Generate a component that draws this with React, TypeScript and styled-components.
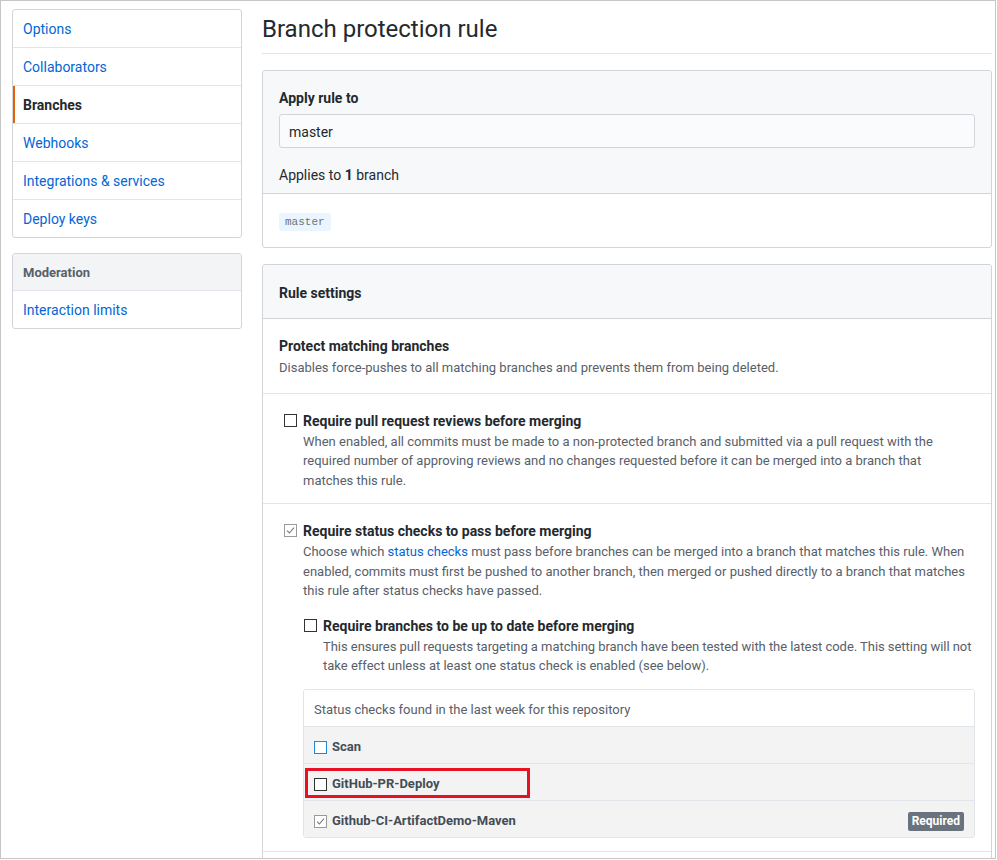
import React from 'react';
import styled, { createGlobalStyle, css } from 'styled-components';

const Global = createGlobalStyle`
  html, body { margin: 0; padding: 0; background: #fff; }
  body {
    font-family: Roboto, "Liberation Sans", sans-serif;
    color: #24292e;
    font-size: 14px;
  }
  * { box-sizing: border-box; }
`;

const Frame = styled.div`
  width: 996px;
  height: 859px;
  border: 1px solid #c6c6c6;
  overflow: hidden;
  display: flex;
  align-items: flex-start;
  gap: 20px;
  padding: 8px 3px 0 11px;
`;

const Sidebar = styled.nav`
  width: 230px;
  flex-shrink: 0;
  display: flex;
  flex-direction: column;
  gap: 15px;
`;

const Menu = styled.div`
  border: 1px solid #d1d5da;
  border-radius: 3px;
  background: #fff;
  overflow: hidden;
`;

const MenuHeading = styled.div`
  padding: 9px 10px 7px;
  font-size: 13px;
  line-height: 20px;
  font-weight: 700;
  color: #586069;
  background: #f3f4f6;
  border-bottom: 1px solid #e1e4e8;
`;

const MenuItem = styled.a<{ $selected?: boolean }>`
  position: relative;
  display: block;
  padding: 9px 10px 7px;
  line-height: 21px;
  font-size: 14px;
  color: #0366d6;
  text-decoration: none;
  border-bottom: 1px solid #e1e4e8;
  &:last-child { border-bottom: 0; }
  ${(p) =>
    p.$selected &&
    css`
      color: #24292e;
      font-weight: 700;
      &::before {
        content: '';
        position: absolute;
        top: 0;
        bottom: 0;
        left: 0;
        width: 2px;
        background: #e36209;
      }
    `}
`;

const Main = styled.main`
  width: 730px;
  flex-shrink: 0;
  display: flex;
  flex-direction: column;
`;

const Subhead = styled.div`
  padding: 2px 0 6px;
  border-bottom: 1px solid #e1e4e8;
  margin-bottom: 16px;
`;

const Heading = styled.h2`
  margin: 0;
  font-size: 24px;
  font-weight: 400;
  line-height: 36px;
  color: #24292e;
`;

const Box = styled.section`
  border: 1px solid #d1d5da;
  border-radius: 3px;
  margin-bottom: 16px;
  background: #fff;
`;

const BoxHeader = styled.div<{ $pad?: string }>`
  background: #f6f8fa;
  padding: ${(p) => p.$pad || '16px'};
  border-bottom: 1px solid #d1d5da;
  border-radius: 3px 3px 0 0;
`;

const Label = styled.div`
  font-size: 14px;
  font-weight: 700;
  line-height: 21px;
`;

const Input = styled.div`
  margin-top: 5px;
  height: 34px;
  display: flex;
  align-items: center;
  padding: 1px 9px 0;
  background: #fafbfc;
  border: 1px solid #d1d5da;
  border-radius: 3px;
  font-size: 14px;
`;

const Applies = styled.div`
  margin-top: 17px;
  font-size: 14px;
  line-height: 21px;
`;

const BoxBody = styled.div<{ $pad?: string }>`
  padding: ${(p) => p.$pad || '16px'};
  border-bottom: 1px solid #e1e4e8;
  &:last-child { border-bottom: 0; }
`;

const TagRow = styled.div`
  display: flex;
  height: 18px;
`;

const BranchTag = styled.code`
  display: block;
  height: 18px;
  line-height: 18px;
  padding: 0 6px;
  font-family: "Liberation Mono", monospace;
  font-size: 11px;
  color: #6a737d;
  background: #eaf5ff;
  border-radius: 3px;
`;

const Title = styled.div<{ $gap?: number }>`
  font-size: 14px;
  font-weight: 700;
  line-height: 21px;
  color: #24292e;
  margin-bottom: ${(p) => p.$gap || 0}px;
`;

const Note = styled.div`
  font-size: 13px;
  line-height: 19.5px;
  color: #586069;
`;

const Line = styled.span<{ $tight?: boolean }>`
  display: block;
  white-space: nowrap;
  letter-spacing: ${(p) => (p.$tight ? '-0.045px' : 'normal')};
`;

const Link = styled.a`
  color: #0366d6;
  text-decoration: none;
`;

const CheckRow = styled.div<{ $indent: number; $top?: number }>`
  display: grid;
  grid-template-columns: 13px 1fr;
  column-gap: 6px;
  padding-left: ${(p) => p.$indent}px;
  margin-top: ${(p) => p.$top || 0}px;
`;

type CheckKind = 'empty' | 'checked' | 'focus';

const CheckBox = styled.span<{ $kind: CheckKind; $top?: number }>`
  width: 13px;
  height: 13px;
  margin-top: ${(p) => (p.$top === undefined ? 3 : p.$top)}px;
  display: inline-flex;
  align-items: center;
  justify-content: center;
  background: #fff;
  border: 1px solid
    ${(p) => (p.$kind === 'checked' ? '#9a9a9a' : p.$kind === 'focus' ? '#1e8ad6' : '#333')};
  flex-shrink: 0;
`;

const Check = ({ kind, top }: { kind: CheckKind; top?: number }) => (
  <CheckBox $kind={kind} $top={top}>
    {kind === 'checked' && (
      <svg width="9" height="9" viewBox="0 0 9 9">
        <path d="M1 4.6 L3.4 7 L8 1.6" fill="none" stroke="#7a7a7a" strokeWidth="1.1" />
      </svg>
    )}
  </CheckBox>
);

const StatusBox = styled.div`
  margin-top: 13.5px;
  border: 1px solid #e1e4e8;
  border-radius: 3px;
  overflow: hidden;
`;

const StatusHeader = styled.div`
  padding: 11px 10px 7px;
  font-size: 13px;
  line-height: 18px;
  color: #586069;
  background: #fff;
  border-bottom: 1px solid #e1e4e8;
`;

const StatusRow = styled.div`
  position: relative;
  display: flex;
  align-items: center;
  gap: 5px;
  height: 37px;
  padding: 4px 10px 0;
  background: #f3f3f3;
  border-bottom: 1px solid #e1e4e8;
  &:last-child { border-bottom: 0; height: 36px; }
`;

const StatusName = styled.span`
  font-size: 13px;
  font-weight: 700;
  color: #444d56;
  line-height: 20px;
  flex: 1;
`;

const Badge = styled.span`
  display: inline-block;
  padding: 0 4px;
  font-size: 12px;
  font-weight: 700;
  line-height: 19px;
  color: #fff;
  background: #6a737d;
  border-radius: 2px;
`;

const Highlight = styled.span`
  position: absolute;
  left: 1px;
  top: 4px;
  width: 225px;
  height: 30px;
  border: 3px solid #e81123;
  pointer-events: none;
`;

const Spacer = styled.div`
  height: 60px;
`;

export default function App() {
  return (
    <>
      <Global />
      <Frame>
        <Sidebar>
          <Menu>
            <MenuItem>Options</MenuItem>
            <MenuItem>Collaborators</MenuItem>
            <MenuItem $selected>Branches</MenuItem>
            <MenuItem>Webhooks</MenuItem>
            <MenuItem>Integrations &amp; services</MenuItem>
            <MenuItem>Deploy keys</MenuItem>
          </Menu>
          <Menu>
            <MenuHeading>Moderation</MenuHeading>
            <MenuItem>Interaction limits</MenuItem>
          </Menu>
        </Sidebar>
        <Main>
          <Subhead>
            <Heading>Branch protection rule</Heading>
          </Subhead>
          <Box>
            <BoxHeader $pad="17px 16px 7px">
              <Label>Apply rule to</Label>
              <Input>master</Input>
              <Applies>
                Applies to <b>1</b> branch
              </Applies>
            </BoxHeader>
            <BoxBody $pad="19px 16px 16px">
              <TagRow>
                <BranchTag>master</BranchTag>
              </TagRow>
            </BoxBody>
          </Box>
          <Box>
            <BoxHeader $pad="18px 16px 14px">
              <Label>Rule settings</Label>
            </BoxHeader>
            <BoxBody $pad="17px 16px 15px">
              <Title $gap={1}>Protect matching branches</Title>
              <Note>Disables force-pushes to all matching branches and prevents them from being deleted.</Note>
            </BoxBody>
            <BoxBody $pad="17px 16px 13px">
              <CheckRow $indent={5}>
                <Check kind="empty" />
                <div>
                  <Title>Require pull request reviews before merging</Title>
                  <Note>
                    <Line>
                      When enabled, all commits must be made to a non-protected branch and submitted via a pull request with the
                    </Line>
                    <Line>
                      required number of approving reviews and no changes requested before it can be merged into a branch that
                    </Line>
                    <Line>matches this rule.</Line>
                  </Note>
                </div>
              </CheckRow>
            </BoxBody>
            <BoxBody $pad="17px 16px 13px">
              <CheckRow $indent={5}>
                <Check kind="checked" />
                <div>
                  <Title>Require status checks to pass before merging</Title>
                  <Note>
                    <Line>
                      Choose which <Link>status checks</Link> must pass before branches can be merged into a branch that matches
                      this rule. When
                    </Line>
                    <Line>
                      enabled, commits must first be pushed to another branch, then merged or pushed directly to a branch that
                      matches
                    </Line>
                    <Line>this rule after status checks have passed.</Line>
                  </Note>
                  <CheckRow $indent={1} $top={15}>
                    <Check kind="empty" />
                    <div>
                      <Title>Require branches to be up to date before merging</Title>
                      <Note>
                        <Line $tight>
                          This ensures pull requests targeting a matching branch have been tested with the latest code. This
                          setting will not
                        </Line>
                        <Line>take effect unless at least one status check is enabled (see below).</Line>
                      </Note>
                    </div>
                  </CheckRow>
                  <StatusBox>
                    <StatusHeader>Status checks found in the last week for this repository</StatusHeader>
                    <StatusRow>
                      <Check kind="focus" top={0} />
                      <StatusName>Scan</StatusName>
                    </StatusRow>
                    <StatusRow>
                      <Check kind="empty" top={0} />
                      <StatusName>GitHub-PR-Deploy</StatusName>
                      <Highlight />
                    </StatusRow>
                    <StatusRow>
                      <Check kind="checked" top={0} />
                      <StatusName>Github-CI-ArtifactDemo-Maven</StatusName>
                      <Badge>Required</Badge>
                    </StatusRow>
                  </StatusBox>
                </div>
              </CheckRow>
            </BoxBody>
            <BoxBody>
              <Spacer />
            </BoxBody>
          </Box>
        </Main>
      </Frame>
    </>
  );
}
